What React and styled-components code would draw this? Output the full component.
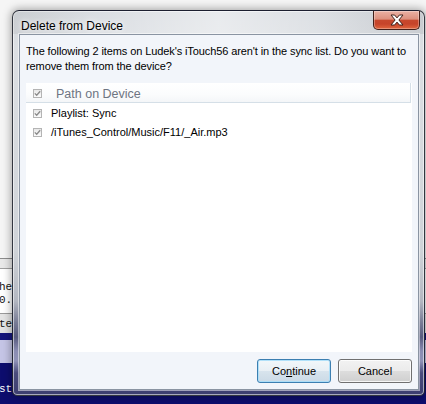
import React from 'react';
import styled, { createGlobalStyle } from 'styled-components';

const GlobalStyle = createGlobalStyle`
  html, body {
    margin: 0;
    padding: 0;
  }
  body {
    width: 426px;
    height: 404px;
    overflow: hidden;
    background: #f5f5f5;
    font-family: "Liberation Sans", Arial, sans-serif;
  }
`;

const Desktop = styled.div`
  position: relative;
  width: 426px;
  height: 404px;
  overflow: hidden;
`;

// the app window sitting behind the dialog
const BackWindow = styled.div`
  position: absolute;
  inset: 0;
  display: flex;
  flex-direction: column;
  font-family: "Liberation Mono", monospace;
  font-size: 11px;
`;

const Band = styled.div`
  flex: ${p => (p.$grow ? 1 : 'none')};
  height: ${p => (p.$grow ? 'auto' : `${p.$h}px`)};
  box-sizing: border-box;
  background: ${p => p.$bg};
  border-top: ${p => (p.$line ? `1px solid ${p.$line}` : 'none')};
  color: ${p => p.$fg || '#111'};
  padding-top: ${p => p.$pt || 0}px;
  line-height: 13px;
  white-space: pre;
  margin-left: -1px;
`;

const Window = styled.div`
  position: absolute;
  left: 12px;
  top: 10px;
  width: 413px;
  height: 386px;
  box-sizing: border-box;
  display: flex;
  flex-direction: column;
  padding: 0 5px 5px 6px;
  border: 1px solid rgba(22, 26, 36, 0.85);
  border-radius: 7px 7px 5px 5px;
  box-shadow: 0 0 8px 1px rgba(0, 0, 0, 0.35), inset 0 0 0 1px rgba(255, 255, 255, 0.55);
  background: linear-gradient(
    to bottom,
    #d6dadf 0px,
    #dcdfe3 40px,
    #cfd3d8 240px,
    #b3b7c1 290px,
    #767a94 312px,
    #585b7e 326px,
    #8a8cb2 340px,
    #8f91b6 350px,
    #4a4c7c 362px,
    #3a3c6e 386px
  );
`;

const TitleBar = styled.div`
  height: 23px;
  flex: none;
  display: flex;
  justify-content: space-between;
  align-items: flex-start;
  margin: 0 -5px 0 -6px;
  padding: 0 4px 0 8px;
  border-radius: 6px 6px 0 0;
  background: linear-gradient(
    90deg,
    rgba(0, 0, 0, 0.06) 0%,
    rgba(255, 255, 255, 0.1) 20%,
    rgba(255, 255, 255, 0.45) 50%,
    rgba(255, 255, 255, 0.15) 75%,
    rgba(0, 0, 0, 0.07) 100%
  );
`;

const Title = styled.div`
  padding-top: 8px;
  font-size: 12px;
  line-height: 14px;
  color: #000;
  text-shadow: 0 0 8px #fff, 0 0 4px rgba(255, 255, 255, 0.8);
`;

const CloseButton = styled.div`
  width: 47px;
  height: 19px;
  box-sizing: border-box;
  display: flex;
  align-items: center;
  justify-content: center;
  border: 1px solid #43201a;
  border-top: none;
  border-radius: 0 0 5px 5px;
  background: linear-gradient(
    to bottom,
    #eab1a4 0%,
    #dc907e 45%,
    #c7482d 52%,
    #c6442a 72%,
    #e1673f 100%
  );
  box-shadow: inset 0 0 0 1px rgba(255, 255, 255, 0.3);
`;

const Client = styled.div`
  flex: 1;
  min-height: 0;
  display: flex;
  flex-direction: column;
  border: 1px solid #8a94a2;
  box-shadow: 0 0 0 1px rgba(255, 255, 255, 0.5);
  background: #f2f5fa;
  padding: 9px 6px 6px 6px;
`;

const Message = styled.div`
  font-size: 11px;
  line-height: 15px;
  letter-spacing: -0.1px;
  color: #000;
  white-space: nowrap;
`;

const List = styled.div`
  flex: 1;
  margin-top: 9px;
  background: #fff;
  display: flex;
  flex-direction: column;
`;

const HeaderRow = styled.div`
  width: 385px;
  height: 20px;
  box-sizing: border-box;
  display: flex;
  align-items: center;
  gap: 14px;
  padding: 2px 0 0 7px;
  background: linear-gradient(#ffffff, #fbfcfd 60%, #f4f6f8);
  border-bottom: 1px solid #d5dfe7;
  border-right: 1px solid #d5dfe7;
`;

const HeaderText = styled.span`
  font-size: 12.5px;
  color: #6e7582;
`;

const Row = styled.div`
  height: 19px;
  display: flex;
  align-items: center;
  gap: 9px;
  padding: 1px 0 0 7px;
  box-sizing: border-box;
  font-size: 11px;
  color: #000;
`;

const Box = styled.span`
  width: 9px;
  height: 9px;
  box-sizing: border-box;
  flex: none;
  display: inline-flex;
  align-items: center;
  justify-content: center;
  border: 1px solid #b4b4b4;
  background: linear-gradient(#e8e8e8, #fbfbfb);
`;

const ButtonBar = styled.div`
  display: flex;
  justify-content: flex-end;
  gap: 7px;
  margin-top: 7px;
`;

const Button = styled.button`
  width: 74px;
  height: 24px;
  box-sizing: border-box;
  padding: 0;
  font-family: "Liberation Sans", Arial, sans-serif;
  font-size: 11px;
  color: #000;
  border: 1px solid ${p => (p.$default ? '#3c7fb1' : '#707070')};
  border-radius: 3px;
  background: ${p =>
    p.$default
      ? 'linear-gradient(#f2f7fa 0%, #e8eff4 50%, #d8e4ed 50%, #cbdae6 100%)'
      : 'linear-gradient(#f2f2f2 0%, #ebebeb 50%, #dddddd 50%, #cfcfcf 100%)'};
  box-shadow: inset 0 0 0 1px
    ${p => (p.$default ? 'rgba(170, 222, 248, 0.9)' : 'rgba(255, 255, 255, 0.8)')};

  u {
    text-decoration: underline;
  }
`;

function Check() {
  return (
    <Box>
      <svg width="7" height="7" viewBox="0 0 7 7">
        <path d="M0.8 3.4 L2.7 5.3 L6.2 1.3" fill="none" stroke="#8a8a8a" strokeWidth="1.3" />
      </svg>
    </Box>
  );
}

export default function App() {
  return (
    <Desktop>
      <GlobalStyle />
      <BackWindow>
        <Band $h={258} $bg="#f5f5f5" />
        <Band $h={10} $bg="#e9e9e9" $line="#8c8c8c" />
        <Band $h={45} $bg="#ffffff" $line="#a0a0a0" $pt={12}>{'he\n0.:'}</Band>
        <Band $h={20} $bg="#e4e4e4" $line="#9a9a9a" $pt={4}>te</Band>
        <Band $h={7} $bg="#16167c" />
        <Band $h={23} $bg="#c5c5e6" />
        <Band $grow $bg="#0d0d6e" $fg="#ffffff" $pt={20}>st.</Band>
      </BackWindow>

      <Window>
        <TitleBar>
          <Title>Delete from Device</Title>
          <CloseButton>
            <svg width="14" height="12" viewBox="0 0 14 12">
              <polygon
                points="1,1 4.6,1 7,3.9 9.4,1 13,1 8.9,6 13,11 9.4,11 7,8.1 4.6,11 1,11 5.1,6"
                fill="#ffffff"
                stroke="#40231c"
                strokeWidth="1"
                strokeLinejoin="round"
              />
            </svg>
          </CloseButton>
        </TitleBar>

        <Client>
          <Message>
            The following 2 items on Ludek's iTouch56 aren't in the sync list. Do you want to
            <br />
            remove them from the device?
          </Message>

          <List>
            <HeaderRow>
              <Check />
              <HeaderText>Path on Device</HeaderText>
            </HeaderRow>
            <Row>
              <Check />
              Playlist: Sync
            </Row>
            <Row>
              <Check />
              /iTunes_Control/Music/F11/_Air.mp3
            </Row>
          </List>

          <ButtonBar>
            <Button $default>
              Co<u>n</u>tinue
            </Button>
            <Button>Cancel</Button>
          </ButtonBar>
        </Client>
      </Window>
    </Desktop>
  );
}
